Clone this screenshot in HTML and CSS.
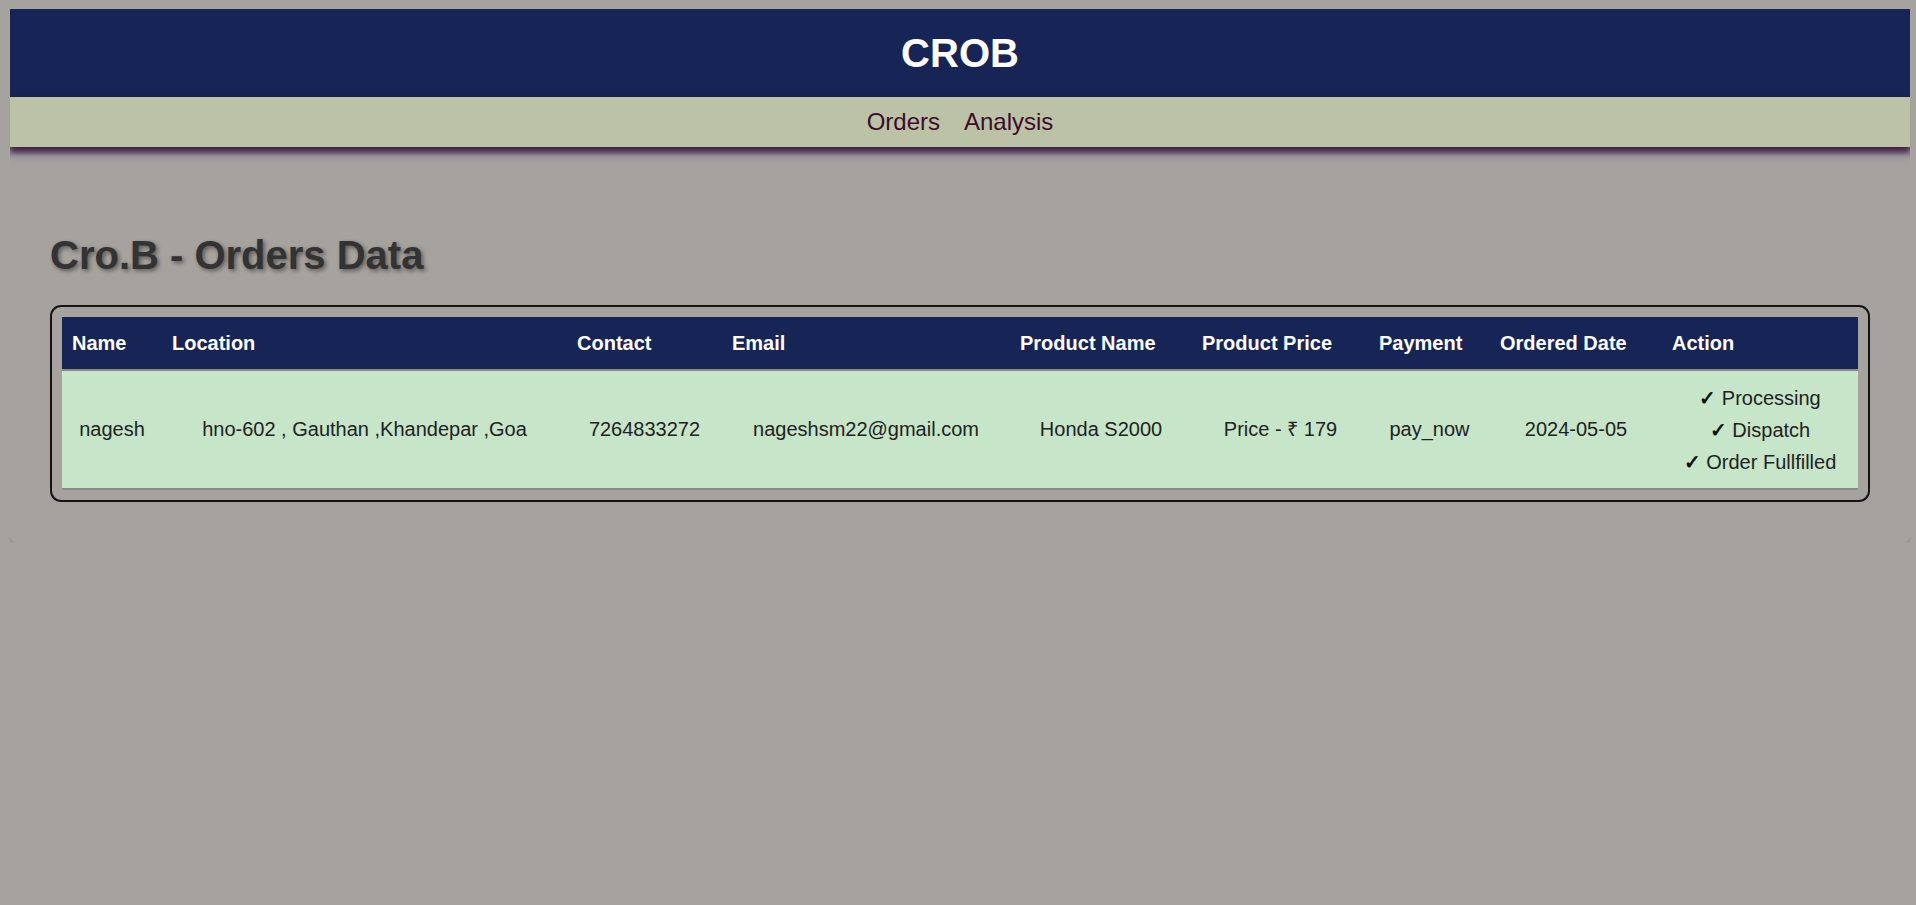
FILE: index.html
```html
<!DOCTYPE html>
<html lang="en">
<head>
<meta charset="utf-8">
<title>CROB</title>
<link rel="stylesheet" href="styles.css">
</head>
<body>
<header class="site-header">
  <div class="brand"><h1 class="brand-title">CROB</h1></div>
  <nav class="nav">
    <a class="nav-link" href="#">Orders</a>
    <a class="nav-link" href="#">Analysis</a>
  </nav>
</header>
<main class="card">
  <h2 class="page-title">Cro.B - Orders Data</h2>
  <div class="table-frame">
    <table class="orders">
      <colgroup>
        <col class="c1"><col class="c2"><col class="c3"><col class="c4"><col class="c5"><col class="c6"><col class="c7"><col class="c8"><col class="c9">
      </colgroup>
      <thead>
        <tr>
          <th>Name</th>
          <th>Location</th>
          <th>Contact</th>
          <th>Email</th>
          <th>Product Name</th>
          <th>Product Price</th>
          <th>Payment</th>
          <th>Ordered Date</th>
          <th>Action</th>
        </tr>
      </thead>
      <tbody>
        <tr>
          <td>nagesh</td>
          <td>hno-602 , Gauthan ,Khandepar ,Goa</td>
          <td>7264833272</td>
          <td>nageshsm22@gmail.com</td>
          <td>Honda S2000</td>
          <td>Price - ₹ 179</td>
          <td>pay_now</td>
          <td>2024-05-05</td>
          <td class="actions">
            <div class="action"><span class="check">✓</span> Processing</div>
            <div class="action"><span class="check">✓</span> Dispatch</div>
            <div class="action"><span class="check">✓</span> Order Fullfilled</div>
          </td>
        </tr>
      </tbody>
    </table>
  </div>
</main>
</body>
</html>
```
FILE: styles.css
```css
html {
  background: #a6a29e;
}
body {
  margin: 9px 6px 0 10px;
  background: #a6a29e;
  font-family: "Liberation Sans", Arial, sans-serif;
  color: #222;
}
.site-header {
  position: relative;
  box-shadow: 0 0 12px 2px rgba(80, 50, 170, 0.9);
}
.brand {
  background: #172456;
  height: 88px;
  display: flex;
  align-items: center;
  justify-content: center;
}
.brand-title {
  margin: 0;
  color: #fff;
  font-size: 40px;
  font-weight: bold;
  line-height: 46px;
}
.nav {
  background: #bbc2a5;
  height: 50px;
  display: flex;
  align-items: center;
  justify-content: center;
  gap: 24px;
  box-shadow: 0 5px 6px rgba(55, 25, 50, 0.9);
  position: relative;
}
.nav-link {
  color: #3b0c2c;
  text-decoration: none;
  font-size: 24px;
  line-height: 28px;
}
.card {
  display: block;
  margin-top: 7px;
  padding: 40px;
  background: #a6a29e;
  border-radius: 6px;
  box-shadow: 0 1px 6px rgba(0, 0, 0, 0.22);
}
.page-title {
  margin: 38px 0 27px 0;
  font-size: 40px;
  line-height: 46px;
  font-weight: bold;
  color: #333;
  text-shadow: 2px 2px 4px rgba(0, 0, 0, 0.45);
}
.table-frame {
  border: 2px solid #151515;
  border-radius: 11px;
  padding: 10px;
}
.orders {
  width: 100%;
  border-collapse: collapse;
  table-layout: fixed;
  font-size: 20px;
}
.c1 { width: 100px; }
.c2 { width: 405px; }
.c3 { width: 155px; }
.c4 { width: 288px; }
.c5 { width: 182px; }
.c6 { width: 177px; }
.c7 { width: 121px; }
.c8 { width: 172px; }
.c9 { width: 196px; }
.orders th {
  background: #172456;
  color: #fff;
  font-weight: bold;
  text-align: left;
  padding: 15px 10px 14px 10px;
  line-height: 23px;
  border-bottom: 2px solid #8a8a8a;
  white-space: nowrap;
}
.orders td {
  background: #c6e5c9;
  text-align: center;
  vertical-align: middle;
  padding: 10px 0 10px;
  line-height: 23px;
  border-bottom: 2px solid #8a8a8a;
  color: #222;
  white-space: nowrap;
}
.orders td.actions {
  padding: 11px 0 10px;
  line-height: 32px;
}
.action {
  line-height: 32px;
}
.check {
  font-weight: bold;
  color: #111;
}
```
